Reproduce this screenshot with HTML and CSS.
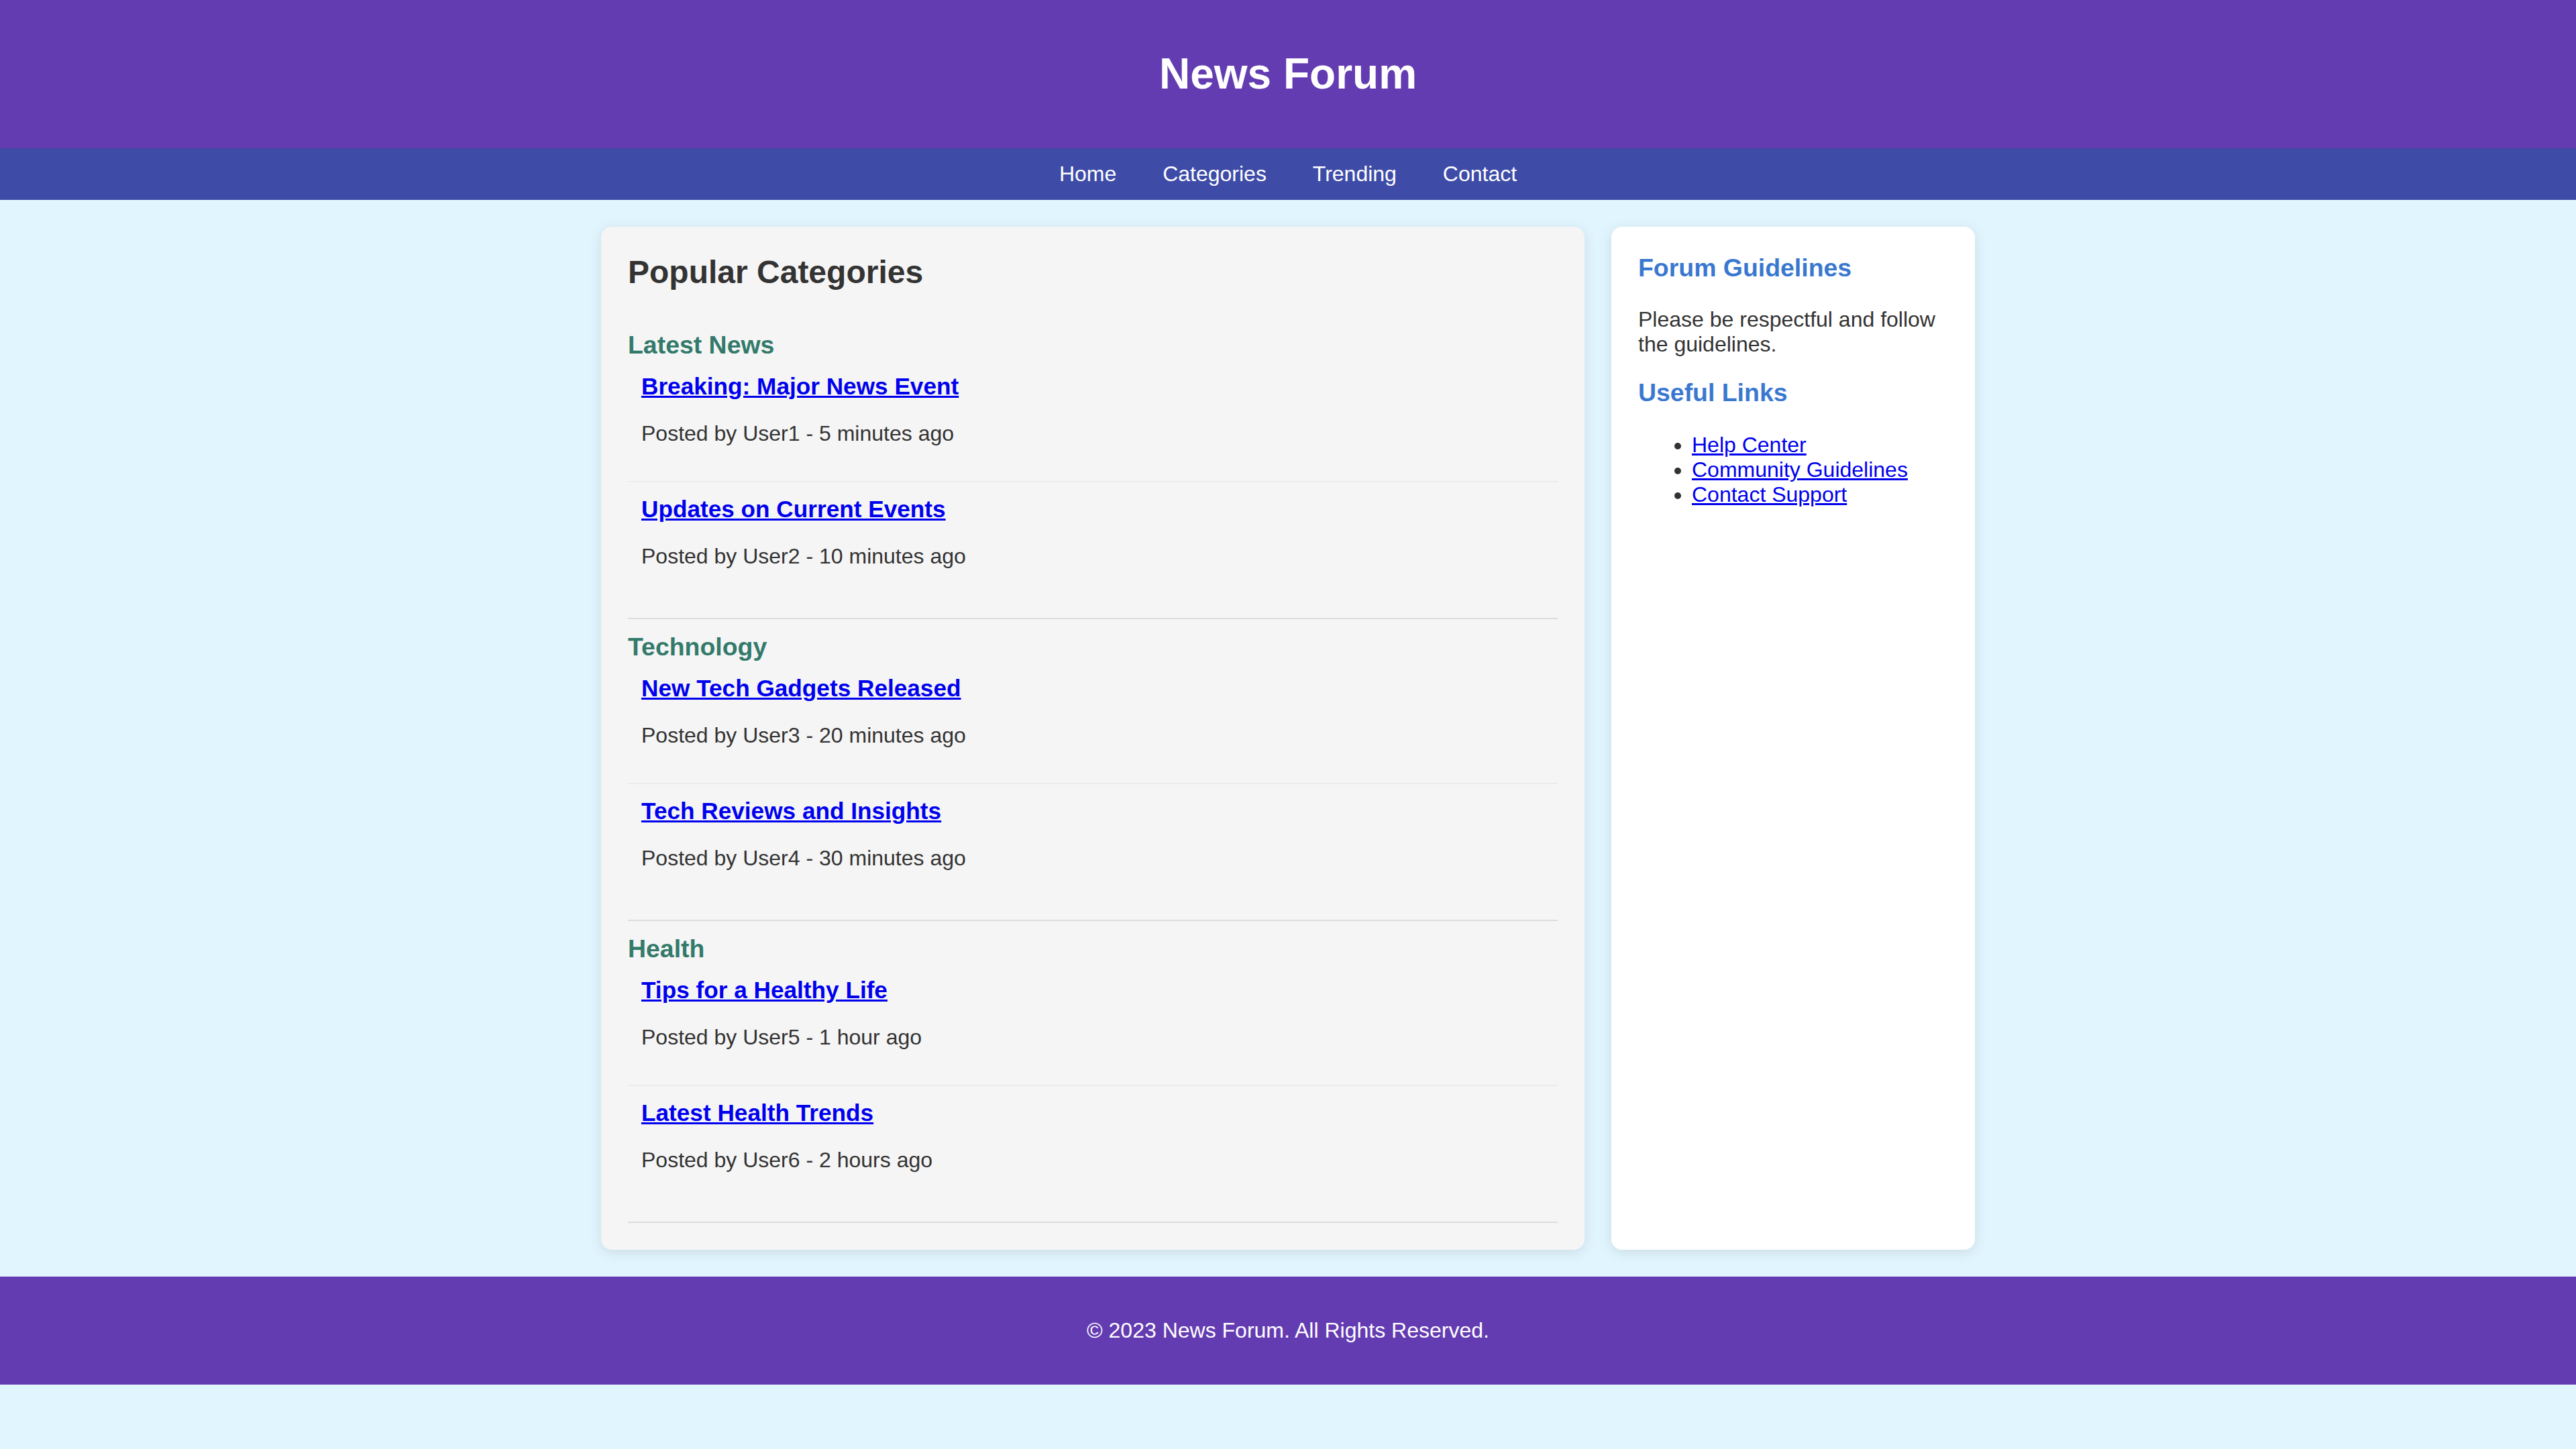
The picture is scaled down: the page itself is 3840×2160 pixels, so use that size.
FILE: index.html
```html
<!DOCTYPE html>
<html lang="en">
<head>
<meta charset="utf-8">
<title>News Forum</title>
<link rel="stylesheet" href="styles.css">
</head>
<body>
<header class="site-header">
  <h1 class="site-title">News Forum</h1>
</header>
<nav class="site-nav">
  <a href="#" class="nav-link">Home</a>
  <a href="#" class="nav-link">Categories</a>
  <a href="#" class="nav-link">Trending</a>
  <a href="#" class="nav-link">Contact</a>
</nav>
<div class="container">
  <main class="main-card">
    <h2 class="main-title">Popular Categories</h2>
    <section class="category">
      <h3 class="category-title">Latest News</h3>
      <div class="post">
        <a href="#" class="post-title">Breaking: Major News Event</a>
        <p class="post-meta">Posted by User1 - 5 minutes ago</p>
      </div>
      <div class="post">
        <a href="#" class="post-title">Updates on Current Events</a>
        <p class="post-meta">Posted by User2 - 10 minutes ago</p>
      </div>
    </section>
    <section class="category">
      <h3 class="category-title">Technology</h3>
      <div class="post">
        <a href="#" class="post-title">New Tech Gadgets Released</a>
        <p class="post-meta">Posted by User3 - 20 minutes ago</p>
      </div>
      <div class="post">
        <a href="#" class="post-title">Tech Reviews and Insights</a>
        <p class="post-meta">Posted by User4 - 30 minutes ago</p>
      </div>
    </section>
    <section class="category">
      <h3 class="category-title">Health</h3>
      <div class="post">
        <a href="#" class="post-title">Tips for a Healthy Life</a>
        <p class="post-meta">Posted by User5 - 1 hour ago</p>
      </div>
      <div class="post">
        <a href="#" class="post-title">Latest Health Trends</a>
        <p class="post-meta">Posted by User6 - 2 hours ago</p>
      </div>
    </section>
  </main>
  <aside class="sidebar">
    <h3 class="side-title">Forum Guidelines</h3>
    <p class="side-text">Please be respectful and follow the guidelines.</p>
    <h3 class="side-title">Useful Links</h3>
    <ul class="side-list">
      <li><a href="#" class="side-link">Help Center</a></li>
      <li><a href="#" class="side-link">Community Guidelines</a></li>
      <li><a href="#" class="side-link">Contact Support</a></li>
    </ul>
  </aside>
</div>
<footer class="site-footer">
  <p class="footer-text">&copy; 2023 News Forum. All Rights Reserved.</p>
</footer>
</body>
</html>
```

FILE: styles.css
```css
html, body {
  margin: 0;
  padding: 0;
}

body {
  font-family: "Liberation Sans", Arial, Helvetica, sans-serif;
  font-size: 32px;
  background: #e1f5fe;
  color: #333;
}

.site-header {
  background: #643cb2;
  color: #fff;
  text-align: center;
  padding: 31px 0 32px;
}

.site-title {
  margin: 42px 0;
  font-size: 64px;
  font-weight: bold;
}

.site-nav {
  background: #3e4ca8;
  text-align: center;
  padding: 20px 0;
}

.nav-link {
  color: #fff;
  text-decoration: none;
  margin: 0 30px;
  font-size: 32px;
}

.container {
  width: 2048px;
  margin: 40px auto;
  display: flex;
  gap: 40px;
}

.main-card {
  flex: 3;
  background: #f5f5f5;
  padding: 40px;
  border-radius: 16px;
  box-shadow: 0 4px 20px rgba(0, 0, 0, 0.1);
}

.main-title {
  margin: 0 0 40px;
  font-size: 48px;
  color: #333;
}

.category {
  padding: 20px 0 21px;
  border-bottom: 2px solid #ddd;
}

.category-title {
  margin: 0;
  font-size: 37.44px;
  color: #337a6b;
}

.post {
  padding: 20px;
  border-bottom: 2px solid #ebebeb;
}

.post:last-child {
  border-bottom: none;
}

.post-title {
  display: block;
  font-size: 35.2px;
  font-weight: bold;
  color: #0000ee;
  text-decoration: underline;
}

.post-meta {
  margin: 32px 0;
  color: #333;
}

.sidebar {
  flex: 1;
  background: #fff;
  padding: 40px;
  border-radius: 16px;
  box-shadow: 0 4px 20px rgba(0, 0, 0, 0.1);
}

.side-title {
  margin: 0 0 37.44px;
  font-size: 37.44px;
  color: #3a78d0;
}

.side-text {
  margin: 32px 0;
}

.side-list {
  margin: 32px 0;
  padding-left: 80px;
}

.side-link {
  color: #0000ee;
}

.site-footer {
  background: #643cb2;
  color: #fff;
  text-align: center;
  padding: 30px 0;
}

.footer-text {
  margin: 32px 0;
}
```
